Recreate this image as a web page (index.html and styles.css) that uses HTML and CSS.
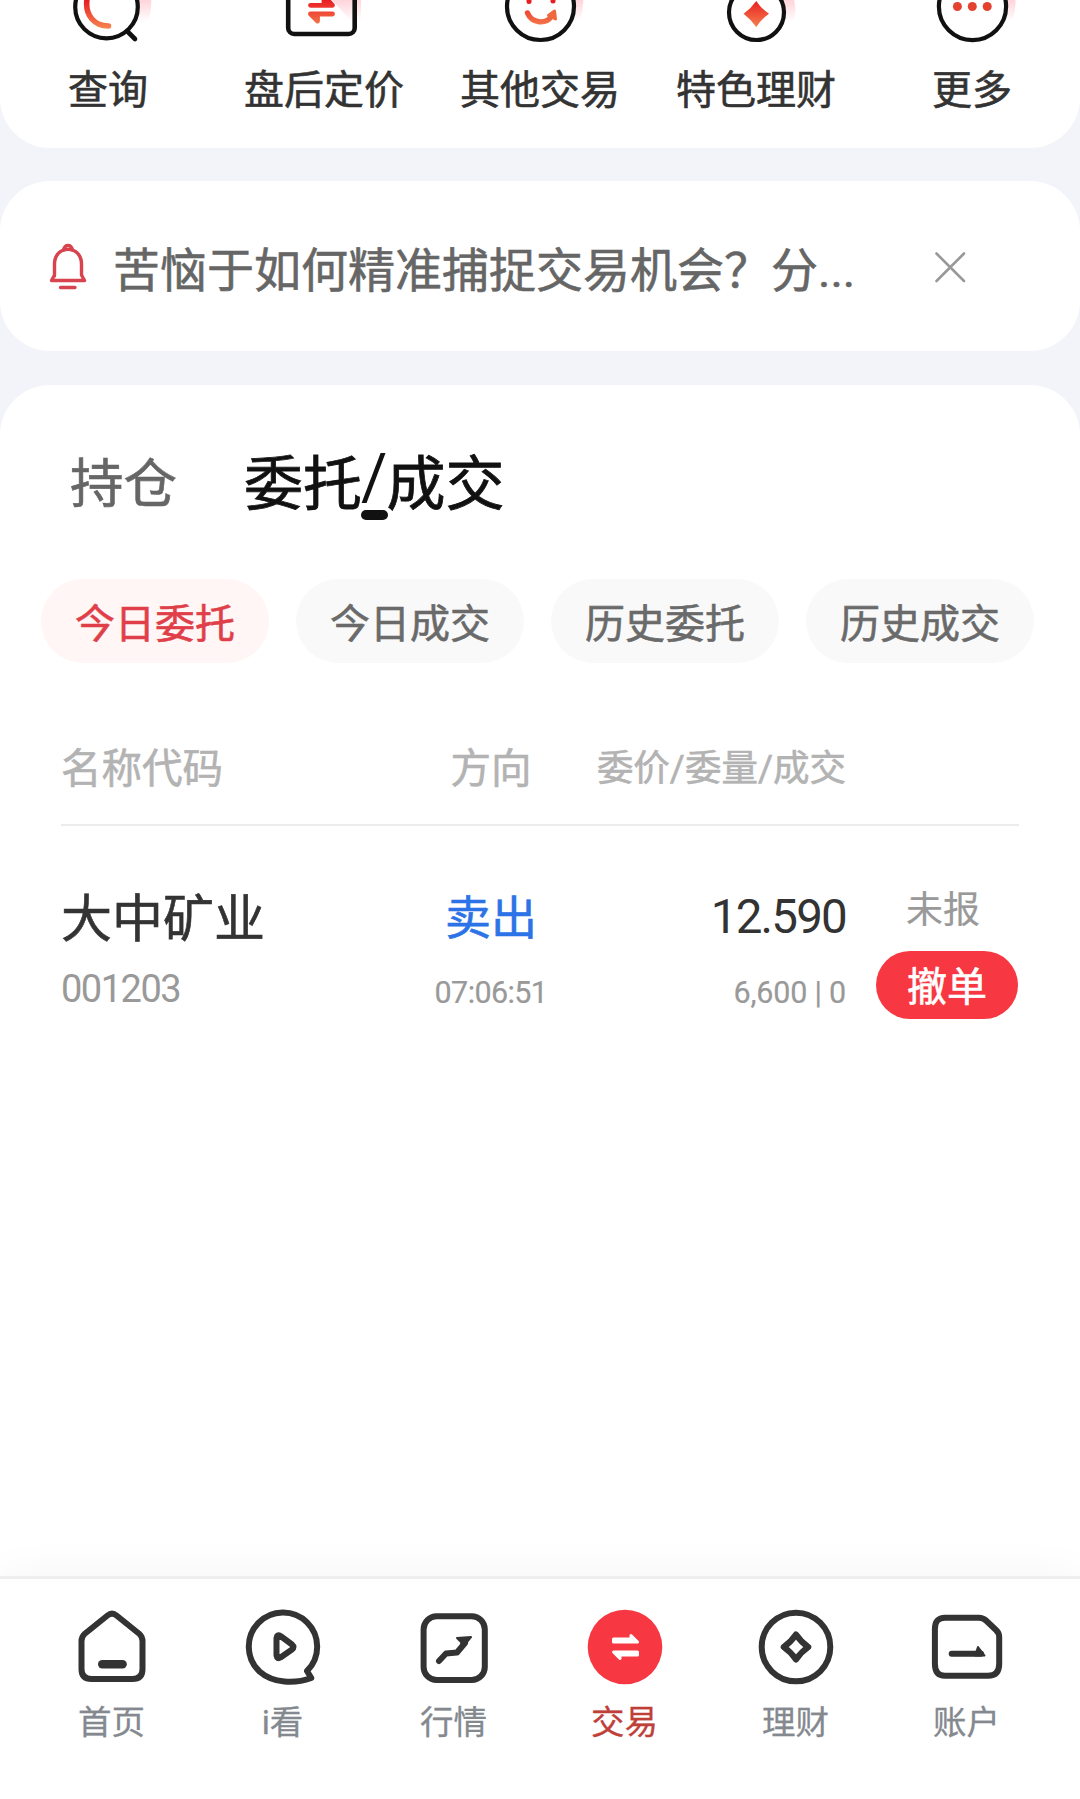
FILE: index.html
```html
<!DOCTYPE html>
<html lang="zh-CN">
<head>
	<meta charset="UTF-8">
	<title>交易</title>
	<link rel="stylesheet" href="styles.css">
</head>
<body>
	<!-- 快捷入口开始 -->
	<ul class="menu">
		<li>
			<svg width="120" height="46" viewBox="0 0 120 46" fill="none">
				<defs>
					<linearGradient id="hot" gradientUnits="userSpaceOnUse" x1="0" y1="0" x2="0" y2="28">
						<stop offset="0" stop-color="#e91c22"/>
						<stop offset="1" stop-color="#f5834f"/>
					</linearGradient>
					<linearGradient id="glow" gradientUnits="userSpaceOnUse" x1="0" y1="-14" x2="0" y2="22">
						<stop offset="0" stop-color="#ffb9c3"/>
						<stop offset="1" stop-color="#ffb9c3" stop-opacity="0"/>
					</linearGradient>
				</defs>
				<path d="M84-12H101Q106 6 100 20L90 25Z" fill="url(#glow)"/>
				<circle cx="58.5" cy="7" r="31.3" fill="#fff" stroke="#111" stroke-width="4.2"/>
				<path d="M79 31L87 39" stroke="#111" stroke-width="4.6" stroke-linecap="round"/>
				<path d="M38.8 1C37.5 15 46 26 60.5 26" stroke="url(#hot)" stroke-width="5.6" stroke-linecap="round"/>
			</svg>
			<span>查询</span>
		</li>
		<li>
			<svg width="120" height="46" viewBox="0 0 120 46" fill="none">
				<path d="M68-10H96Q98 6 96 24H90L68 0Z" fill="url(#glow)"/>
				<rect x="24.2" y="-30" width="66.5" height="64" rx="6" stroke="#111" stroke-width="4.6"/>
				<path d="M46.5 5.3H68.5L60-4V5M68.5 14H46.5L53.5 21V14" stroke="url(#hot)" stroke-width="4.8" stroke-linecap="round" stroke-linejoin="round"/>
			</svg>
			<span>盘后定价</span>
		</li>
		<li>
			<svg width="120" height="46" viewBox="0 0 120 46" fill="none">
				<path d="M84-12H101Q106 4 100 19L90 25Z" fill="url(#glow)"/>
				<circle cx="60.5" cy="6.5" r="33.5" fill="#fff" stroke="#111" stroke-width="4.2"/>
				<path d="M49-4V1.5M73-4V1" stroke="#e91c22" stroke-width="5" stroke-linecap="round"/>
				<path d="M47.5 13C52 24 66 24 71 17" stroke="url(#hot)" stroke-width="5.4" stroke-linecap="round"/>
				<path d="M68.5 15.5L74.5 11L75.5 19Z" fill="#f06a3f" stroke="#f06a3f" stroke-width="3" stroke-linejoin="round"/>
			</svg>
			<span>其他交易</span>
		</li>
		<li>
			<svg width="120" height="46" viewBox="0 0 120 46" fill="none">
				<path d="M80-12H94Q102 6 98 20L86 28Z" fill="url(#glow)"/>
				<circle cx="60.5" cy="12.5" r="27.5" fill="#fff" stroke="#111" stroke-width="4.2"/>
				<path d="M60.3 1Q65 8.5 73 13.7Q65 19.5 60.3 27Q55 19.5 47.6 13.7Q55 8.5 60.3 1Z" fill="url(#hot)"/>
			</svg>
			<span>特色理财</span>
		</li>
		<li>
			<svg width="120" height="46" viewBox="0 0 120 46" fill="none">
				<path d="M84-12H101Q106 4 101 18L90 25Z" fill="url(#glow)"/>
				<circle cx="60.5" cy="6.5" r="33.6" fill="#fff" stroke="#111" stroke-width="4.2"/>
				<g fill="#e4412f">
					<circle cx="45.4" cy="6.5" r="4.5"/>
					<circle cx="60.3" cy="6.5" r="4.5"/>
					<circle cx="75.2" cy="6.5" r="4.5"/>
				</g>
			</svg>
			<span>更多</span>
		</li>
	</ul>
	<!-- 快捷入口结束 -->
	<!-- 消息提示 -->
	<div class="notice">
		<svg width="40" height="50" viewBox="0 0 40 50" fill="none" stroke="#d8444e" stroke-width="3.4" stroke-linecap="round" stroke-linejoin="round">
			<path d="M5.5 34V22C5.5 2.5 32.5 2.5 32.5 22V33L35.5 38.5H2.5L5.5 33"/>
			<path d="M14.5 8C16 2 22 2 23.5 8M11.5 45.5H26"/>
		</svg>
		<p>苦恼于如何精准捕捉交易机会？分...</p>
		<svg width="32" height="32" viewBox="0 0 32 32" fill="none" stroke="#999" stroke-width="2.6" stroke-linecap="round">
			<path d="M1.5 2.5L29 30M29 2.5L1.5 30"/>
		</svg>
	</div>
	<!-- 委托列表开始 -->
	<div class="main">
		<ul class="tabs">
			<li>持仓</li>
			<li class="on">委托<i>/</i>成交</li>
		</ul>
		<ul class="filter">
			<li class="on">今日委托</li>
			<li>今日成交</li>
			<li>历史委托</li>
			<li>历史成交</li>
		</ul>
		<div class="thead">
			<span>名称代码</span>
			<span class="center">方向</span>
			<span class="right">委价/委量/成交</span>
		</div>
		<div class="row">
			<div>
				<p class="name">大中矿业</p>
				<p class="code">001203</p>
			</div>
			<div class="center">
				<p class="sell">卖出</p>
				<p class="small">07:06:51</p>
			</div>
			<div class="right">
				<p class="price">12.590</p>
				<p class="small amount">6,600 | 0</p>
			</div>
			<div class="state">
				<p>未报</p>
				<button class="cancel">撤单</button>
			</div>
		</div>
	</div>
	<!-- 委托列表结束 -->
	<!-- 底部导航 -->
	<nav>
		<a>
			<svg width="80" height="80" viewBox="0 0 80 80">
				<path d="M9.5 34Q9.5 30 12.5 27L35.5 8.5Q40 4.8 44.5 8.5L67.5 27Q70.5 30 70.5 34V62Q70.5 72 60.5 72H19.5Q9.5 72 9.5 62Z"/>
				<path d="M30.2 57.3H50.6" stroke-width="8.4"/>
			</svg>
			<span>首页</span>
		</a>
		<a>
			<svg width="80" height="80" viewBox="0 0 80 80">
				<path d="M64 64A34.2 34.2 0 1 0 16.5 64.5C30 76.5 52 77 68.3 71Z"/>
				<path d="M33.5 31Q34 27 37.5 29L49 37.5Q52 40 49 42.5L37.5 50.5Q34 52.5 33.5 48.5Z"/>
			</svg>
			<span>i看</span>
		</a>
		<a>
			<svg width="80" height="80" viewBox="0 0 80 80">
				<rect x="9.6" y="9.3" width="61.2" height="63.7" rx="13"/>
				<path d="M25 54L32 46.5L43 45.5L51 36"/>
				<path d="M43 31L57 30L48 41L47 35Z" fill="#333" stroke-width="2"/>
			</svg>
			<span>行情</span>
		</a>
		<a class="on">
			<svg width="80" height="80" viewBox="0 0 80 80">
				<circle cx="40" cy="40" r="37.3" fill="#f73842" stroke="none"/>
				<path d="M28.5 35H52.5L46 28.5V32H28.5ZM52.5 45H28.5L35 51.5V48H52.5Z" fill="#fff" stroke="#fff" stroke-width="3"/>
			</svg>
			<span>交易</span>
		</a>
		<a>
			<svg width="80" height="80" viewBox="0 0 80 80">
				<circle cx="40" cy="40" r="34.3"/>
				<path d="M40 27.5Q45 35 52.3 40Q45 45 40 52.5Q35 45 27.7 40Q35 35 40 27.5Z"/>
			</svg>
			<span>理财</span>
		</a>
		<a>
			<svg width="80" height="80" viewBox="0 0 80 80">
				<path d="M18 10.7H52Q56 10.7 59 13.5L69 23Q72.2 26 72.2 30V57Q72.2 68.7 61 68.7H18Q7.9 68.7 7.9 57V22Q7.9 10.7 18 10.7Z"/>
				<path d="M24.7 46.8H54"/>
				<path d="M51 40L57.5 48.5H48Z" fill="#333" stroke-width="2"/>
			</svg>
			<span>账户</span>
		</a>
	</nav>
</body>
</html>
```

FILE: styles.css
```css
*{
	margin:0;
	padding:0;
	box-sizing:border-box;
}
ul{
	list-style: none;
}
body{
	height:1799px;
	display:flex;
	flex-direction:column;
	background:#f3f4f9;
	color:#333;
	font-family:Roboto,"Noto Sans CJK SC",sans-serif;
	-webkit-text-stroke:.6px currentColor;
	overflow:hidden;
}
/* 快捷入口 */
.menu{
	display:flex;
	height:148px;
	background:#fff;
	border-radius:0 0 50px 50px;
}
.menu li{
	flex:1;
	display:flex;
	flex-direction:column;
	align-items:center;
	font-size:40px;
	line-height:40px;
}
.menu span{
	margin-top:25px;
}
/* 消息提示 */
.notice{
	display:flex;
	align-items:center;
	height:170px;
	margin:33px 0 34px;
	padding:2px 113px 0 49px;
	background:#fff;
	border-radius:50px;
	color:#666;
	font-size:47px;
}
.notice p{
	flex:1;
	margin-left:24px;
	padding-top:8px;
	line-height:60px;
}
/* 列表 */
.main{
	flex:1;
	background:#fff;
	border-radius:50px 50px 0 0;
	padding-top:54px;
}
.tabs{
	display:flex;
	align-items:center;
	height:80px;
	padding-left:70px;
	gap:67px;
	font-size:53.5px;
	color:#666;
}
.tabs .on{
	position:relative;
	padding-top:8px;
	font-size:59px;
	line-height:70px;
	color:#111;
	-webkit-text-stroke-width:.8px;
}
.tabs i{
	font-style:normal;
	font-size:64px;
	line-height:1;
	vertical-align:6px;
	margin:0 -1px;
	-webkit-text-stroke-width:0;
}
.tabs .on::after{
	content:"";
	position:absolute;
	left:50%;
	bottom:0;
	width:27px;
	height:10px;
	margin-left:-13px;
	border-radius:5px;
	background:#111;
}
.filter{
	display:flex;
	gap:27px;
	margin:60px 0 0 41px;
}
.filter li{
	width:228px;
	height:84px;
	padding-top:4px;
	line-height:84px;
	border-radius:42px;
	background:#f9f9f9;
	color:#6a6a6a;
	font-size:40px;
	text-align:center;
}
.filter .on{
	background:#fff6f5;
	color:#e03f49;
}
.thead,.row{
	display:grid;
	grid-template-columns:340px 180px 265px 173px;
	margin:0 61px;
}
.thead{
	height:163px;
	padding-top:76px;
	border-bottom:2px solid #ececec;
	color:#b3b3b3;
	font-size:40.5px;
	line-height:60px;
}
.thead .right{
	font-size:36.5px;
}
.center{
	text-align:center;
}
.right{
	text-align:right;
}
.row{
	padding-top:61px;
	color:#999;
}
.row p{
	white-space:nowrap;
}
.name,.sell,.price{
	height:60px;
	line-height:60px;
}
.name{
	padding-top:3px;
	font-size:51px;
	color:#333;
}
.code{
	margin-top:19px;
	font-size:38px;
	line-height:46px;
	letter-spacing:-1.5px;
	-webkit-text-stroke-width:0;
}
.sell{
	padding-top:1px;
	font-size:46px;
	color:#2b73e6;
}
.small{
	margin-top:23px;
	font-size:30.5px;
	line-height:46px;
	letter-spacing:-.6px;
	-webkit-text-stroke-width:.2px;
}
.amount{
	letter-spacing:-.2px;
}
.price{
	font-size:47.5px;
	color:#333;
	letter-spacing:-1.8px;
	-webkit-text-stroke-width:0;
}
.state{
	padding-left:30px;
	font-size:37px;
}
.state p{
	padding:2px 0 0 30px;
	line-height:44px;
	-webkit-text-stroke-width:.2px;
}
.cancel{
	display:block;
	width:142px;
	height:68px;
	margin-top:18px;
	padding-top:6px;
	border:none;
	border-radius:34px;
	background:#f73842;
	color:#fff;
	font-family:inherit;
	font-size:40px;
	line-height:62px;
}
/* 底部导航 */
nav{
	position:relative;
	display:flex;
	height:223px;
	padding:28px 28px 0 26px;
	border-top:3px solid #eee;
	background:#fff;
	box-shadow:0 -4px 40px rgba(0,0,0,.04);
}
nav a{
	flex:1;
	display:flex;
	flex-direction:column;
	align-items:center;
	color:#84888f;
	font-size:33.5px;
	line-height:40px;
	-webkit-text-stroke-width:.3px;
}
nav svg{
	fill:none;
	stroke:#333;
	stroke-width:6;
	stroke-linecap:round;
	stroke-linejoin:round;
}
nav span{
	margin-top:16px;
}
nav .on{
	color:#bf4039;
}
```
